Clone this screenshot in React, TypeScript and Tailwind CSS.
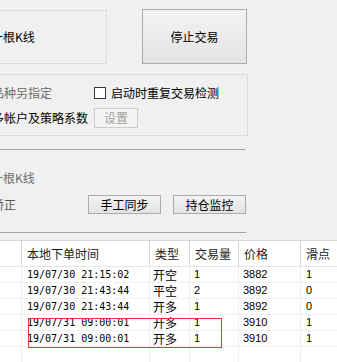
import React from 'react';

const rows = [
  { time: '19/07/30 21:15:02', type: '开空', qty: '1', price: '3882', slip: '1' },
  { time: '19/07/30 21:43:44', type: '平空', qty: '2', price: '3892', slip: '0' },
  { time: '19/07/30 21:43:44', type: '开多', qty: '1', price: '3892', slip: '0' },
  { time: '19/07/31 09:00:01', type: '开多', qty: '1', price: '3910', slip: '1' },
  { time: '19/07/31 09:00:01', type: '开多', qty: '1', price: '3910', slip: '1' },
];

const cols = 'grid grid-cols-[22px_128px_40px_49px_62px_1fr]';

const WinButton: React.FC<{ label: string; className?: string }> = ({ label, className = '' }) => (
  <div
    className={`flex items-center justify-center border border-[#acacac] bg-gradient-to-b from-[#f3f3f3] to-[#e3e3e3] text-black ${className}`}
  >
    {label}
  </div>
);

export default function App() {
  return (
    <div className="relative w-[337px] h-[362px] overflow-hidden bg-[#f0f0f0] text-[12px] leading-none text-black font-['Noto_Sans_CJK_SC',sans-serif]">
      {/* top: group + stop button */}
      <div className="flex items-start pt-[9px] h-[74px]">
        <div className="-ml-[14px] mt-[1px] w-[121px] h-[54px] border border-[#dcdcdc] flex items-center pl-[4px]">
          一根K线
        </div>
        <WinButton label="停止交易" className="ml-[35px] w-[105px] h-[55px]" />
      </div>

      {/* options group */}
      <div className="-ml-[14px] w-[262px] h-[62px] border border-[#dcdcdc] pt-[10px] pl-[5px]">
        <div className="flex items-center h-[16px]">
          <span className="w-[102px] text-[#6d6d6d]">品种另指定</span>
          <span className="w-[12px] h-[12px] border border-[#333333] bg-white" />
          <span className="ml-[5px]">启动时重复交易检测</span>
        </div>
        <div className="flex items-center h-[20px] mt-[7px]">
          <span className="w-[102px]">多帐户及策略系数</span>
          <div className="w-[44px] h-[20px] border border-[#cccccc] bg-[#f4f4f4] text-[#a0a0a0] flex items-center justify-center">
            设置
          </div>
        </div>
      </div>

      <div className="mt-[13px] w-[245px] h-px bg-[#a0a0a0]" />

      <div className="mt-[20px] h-[16px] flex items-center -ml-[9px] text-[#6d6d6d]">一根K线</div>
      <div className="mt-[9px] flex items-center h-[19px]">
        <span className="-ml-[8px] w-[96px] text-[#555555]">矫正</span>
        <WinButton label="手工同步" className="w-[73px] h-[19px]" />
        <WinButton label="持仓监控" className="ml-[12px] w-[73px] h-[19px]" />
      </div>

      <div className="mt-[18px] w-[246px] h-px bg-[#a0a0a0]" />

      {/* table */}
      <div className="mt-[7px] bg-white border-t border-[#d5d5d5]">
        <div className={`${cols} h-[26px] border-b border-[#e5e5e5] text-[#1e1e1e]`}>
          {['', '本地下单时间', '类型', '交易量', '价格', '滑点'].map((h, i) => (
            <div
              key={i}
              className={`flex items-center pl-[5px] ${i < 5 ? 'border-r border-[#d5d5d5]' : ''}`}
            >
              {h}
            </div>
          ))}
        </div>
        {[...rows, null].map((r, i) => (
          <div key={i} className={`${cols} h-[16px] border-b border-[#f0f0f0]`}>
            <div className="border-r border-[#f0f0f0]" />
            <div className="border-r border-[#f0f0f0] flex items-center pl-[5px] font-['DejaVu_Sans_Mono',monospace] text-[10px]">
              {r?.time}
            </div>
            <div className="border-r border-[#f0f0f0] flex items-center pl-[3px]">{r?.type}</div>
            <div className="border-r border-[#f0f0f0] flex items-center pl-[4px] font-['Liberation_Sans',sans-serif] text-[11px]">
              {r?.qty}
            </div>
            <div className="border-r border-[#f0f0f0] flex items-center pl-[4px] font-['Liberation_Sans',sans-serif] text-[11px]">
              {r?.price}
            </div>
            <div className="flex items-center pl-[5px] font-['Liberation_Sans',sans-serif] text-[11px]">
              {r?.slip}
            </div>
          </div>
        ))}
      </div>

      {/* highlight box */}
      <div className="absolute left-[28px] top-[318px] w-[194px] h-[30px] border border-[#e53935]" />
    </div>
  );
}
